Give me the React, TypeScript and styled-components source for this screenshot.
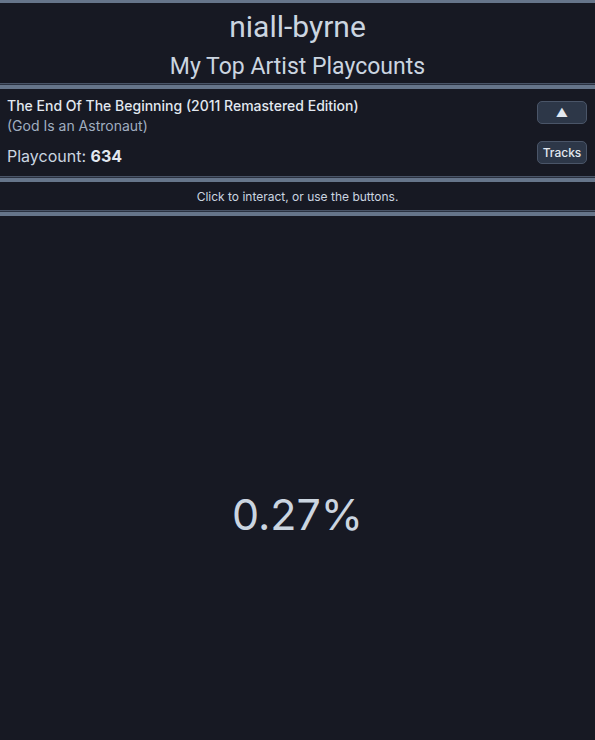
import React from "react";
import styled, { createGlobalStyle } from "styled-components";

const Global = createGlobalStyle`
  html, body { margin: 0; padding: 0; background: #171923; }
  body { font-family: Inter, "Noto Sans", sans-serif; color: #CBD5E0; }
`;

const Page = styled.div`
  display: flex;
  flex-direction: column;
  height: 740px;
  box-sizing: border-box;
  overflow: hidden;
  background: #171923;
  border-top: 3px solid #66758a;
`;

const Header = styled.header`
  display: flex;
  flex-direction: column;
  align-items: center;
  padding-top: 6px;
  padding-bottom: 2px;
  font-family: Roboto, "Noto Sans", sans-serif;
  color: #CBD5E0;
`;

const Title = styled.h1`
  margin: 0;
  font-size: 30px;
  line-height: 36px;
  font-weight: 400;
`;

const Subtitle = styled.h2`
  margin: 8px 0 0;
  font-size: 23px;
  line-height: 28px;
  font-weight: 400;
`;

const Divider = styled.div`
  flex: none;
  height: 5px;
  border-top: 1px solid #4a5568;
  box-shadow: inset 0 1px 0 #2a3140;
  background: #66758a;
`;

const TrackRow = styled.section`
  display: flex;
  align-items: flex-start;
  justify-content: space-between;
  padding: 7px 8px 8px 7px;
`;

const TrackInfo = styled.div`
  display: flex;
  flex-direction: column;
`;

const TrackName = styled.div`
  font-size: 14px;
  line-height: 20px;
  font-weight: 500;
  color: #E2E8F0;
`;

const ArtistName = styled.div`
  font-size: 14px;
  line-height: 20px;
  color: #A0AEC0;
`;

const Playcount = styled.div`
  margin-top: 8px;
  font-size: 16px;
  line-height: 24px;
  color: #CBD5E0;
  b { font-weight: 700; color: #E2E8F0; }
`;

const ButtonColumn = styled.div`
  display: flex;
  flex-direction: column;
  gap: 17px;
  margin-top: 5px;
`;

const Button = styled.button`
  width: 50px;
  height: 23px;
  padding: 0;
  display: flex;
  align-items: center;
  justify-content: center;
  background: #2D3748;
  border: 1px solid #4A5568;
  border-radius: 5px;
  color: #E2E8F0;
  font-family: Inter, "Noto Sans", sans-serif;
  font-size: 12px;
  font-weight: 500;
  cursor: pointer;
`;

const Hint = styled.div`
  padding: 6px 0 4px;
  text-align: center;
  font-size: 12px;
  line-height: 18px;
  color: #CBD5E0;
`;

const Visual = styled.main`
  flex: 1;
  display: flex;
  align-items: flex-start;
  justify-content: center;
  padding-top: 273px;
`;

const Percent = styled.div`
  font-size: 43px;
  line-height: 1.2;
  color: #CBD5E0;
`;

export default function App() {
  return (
    <>
      <Global />
      <Page>
        <Header>
          <Title>niall-byrne</Title>
          <Subtitle>My Top Artist Playcounts</Subtitle>
        </Header>
        <Divider />
        <TrackRow>
          <TrackInfo>
            <TrackName>The End Of The Beginning (2011 Remastered Edition)</TrackName>
            <ArtistName>(God Is an Astronaut)</ArtistName>
            <Playcount>
              Playcount: <b>634</b>
            </Playcount>
          </TrackInfo>
          <ButtonColumn>
            <Button aria-label="toggle">▲</Button>
            <Button>Tracks</Button>
          </ButtonColumn>
        </TrackRow>
        <Divider />
        <Hint>Click to interact, or use the buttons.</Hint>
        <Divider />
        <Visual>
          <Percent>0.27%</Percent>
        </Visual>
      </Page>
    </>
  );
}
